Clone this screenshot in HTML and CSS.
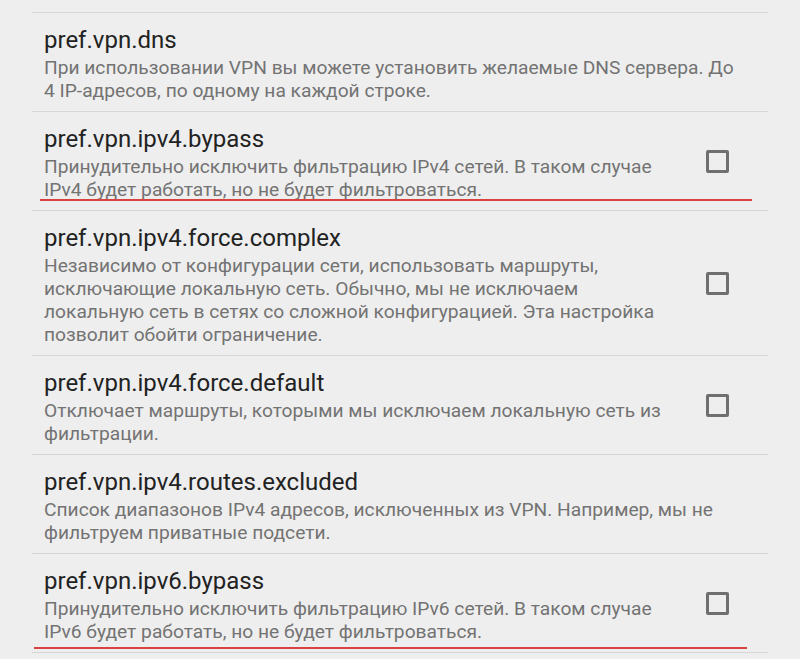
FILE: index.html
```html
<!DOCTYPE html>
<html lang="ru">
<head>
<meta charset="utf-8">
<title>Настройки</title>
<link rel="stylesheet" href="styles.css">
</head>
<body>
<div class="list">
  <div class="pref pref--prev">
    <div class="pref-text">
      <div class="summary">включая все сети, заданные выше.</div>
    </div>
  </div>
  <div class="pref">
    <div class="pref-text">
      <div class="title">pref.vpn.dns</div>
      <div class="summary">При использовании VPN вы можете установить желаемые DNS сервера. До 4 IP-адресов, по одному на каждой строке.</div>
    </div>
  </div>
  <div class="pref">
    <div class="pref-text">
      <div class="title">pref.vpn.ipv4.bypass</div>
      <div class="summary">Принудительно исключить фильтрацию IPv4 сетей. В таком случае IPv4 будет работать, но не будет фильтроваться.</div>
    </div>
    <span class="checkbox"></span>
    <span class="mark mark--a"></span>
  </div>
  <div class="pref">
    <div class="pref-text">
      <div class="title">pref.vpn.ipv4.force.complex</div>
      <div class="summary">Независимо от конфигурации сети, использовать маршруты, исключающие локальную сеть. Обычно, мы не исключаем локальную сеть в сетях со сложной конфигурацией. Эта настройка позволит обойти ограничение.</div>
    </div>
    <span class="checkbox"></span>
  </div>
  <div class="pref">
    <div class="pref-text">
      <div class="title">pref.vpn.ipv4.force.default</div>
      <div class="summary">Отключает маршруты, которыми мы исключаем локальную сеть из фильтрации.</div>
    </div>
    <span class="checkbox"></span>
  </div>
  <div class="pref">
    <div class="pref-text">
      <div class="title">pref.vpn.ipv4.routes.excluded</div>
      <div class="summary">Список диапазонов IPv4 адресов, исключенных из VPN. Например, мы не фильтруем приватные подсети.</div>
    </div>
  </div>
  <div class="pref">
    <div class="pref-text">
      <div class="title">pref.vpn.ipv6.bypass</div>
      <div class="summary">Принудительно исключить фильтрацию IPv6 сетей. В таком случае IPv6 будет работать, но не будет фильтроваться.</div>
    </div>
    <span class="checkbox"></span>
    <span class="mark mark--b"></span>
  </div>
</div>
</body>
</html>
```
FILE: styles.css
```css
html, body {
  margin: 0;
  padding: 0;
  background: #eeeeee;
}

body {
  font-family: Roboto, "Noto Sans", "DejaVu Sans", sans-serif;
  overflow: hidden;
  height: 659px;
}

.list {
  margin: -21px 32px 0;
}

.pref {
  position: relative;
  display: flex;
  align-items: center;
  padding: 13px 24px 9px 12px;
  border-bottom: 1px solid #d7d7d7;
}

.pref--prev {
  padding-top: 0;
  padding-bottom: 10px;
}

.pref-text {
  flex: 1;
  min-width: 0;
}

.title {
  font-size: 24px;
  line-height: 28px;
  color: #222222;
}

.summary {
  margin-top: 2px;
  font-size: 19.2px;
  line-height: 23px;
  color: #737373;
}

.pref--prev .summary {
  margin-top: 0;
}

.checkbox {
  flex: none;
  width: 17px;
  height: 17px;
  border: 3px solid #6f6f6f;
  border-radius: 2px;
  margin: 0 15px 4px 42px;
}

.mark {
  position: absolute;
  height: 2px;
  background: #d8433f;
}

.mark--a {
  top: 87px;
  left: 8px;
  width: 712px;
}

.mark--b {
  top: 93px;
  left: 2px;
  width: 713px;
}
```
